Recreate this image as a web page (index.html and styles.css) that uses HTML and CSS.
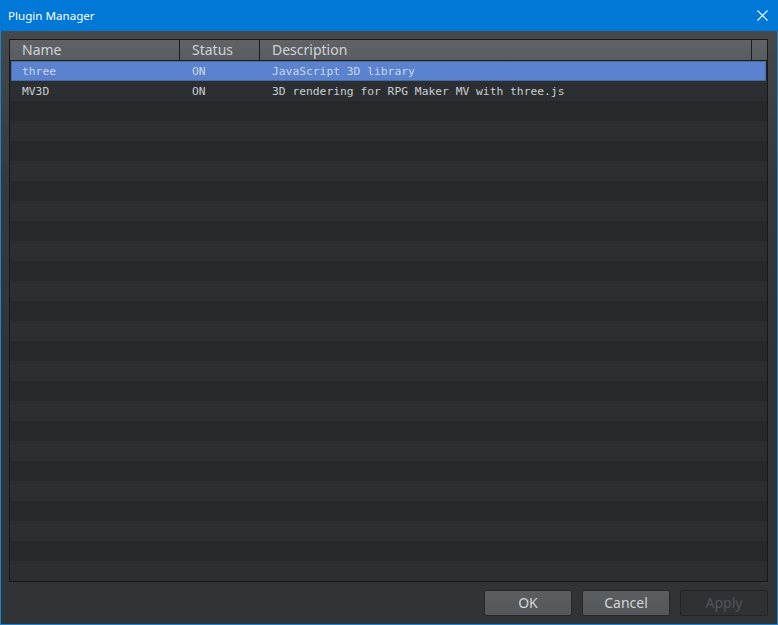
FILE: index.html
```html
<!DOCTYPE html>
<html lang="en">
<head>
    <meta charset="UTF-8">
    <title>Plugin Manager</title>
    <link rel="stylesheet" href="styles.css">
</head>
<body>
    <div class="window">
        <div class="titlebar">
            <span class="title">Plugin Manager</span>
            <svg class="close" width="11" height="11" viewBox="0 0 11 11">
                <path d="M0.5 0.5 L10.5 10.5 M10.5 0.5 L0.5 10.5" stroke="#fff" stroke-width="1.1" fill="none"/>
            </svg>
        </div>
        <div class="content">
            <div class="list">
                <div class="list-header">
                    <div class="col col-name">Name</div>
                    <div class="col col-status">Status</div>
                    <div class="col col-desc">Description</div>
                    <div class="col col-pad"></div>
                </div>
                <div class="list-body">
                    <div class="row selected">
                        <div class="col col-name">three</div>
                        <div class="col col-status">ON</div>
                        <div class="col col-desc">JavaScript 3D library</div>
                    </div>
                    <div class="row">
                        <div class="col col-name">MV3D</div>
                        <div class="col col-status">ON</div>
                        <div class="col col-desc">3D rendering for RPG Maker MV with three.js</div>
                    </div>
                </div>
            </div>
            <div class="buttons">
                <button type="button">OK</button>
                <button type="button">Cancel</button>
                <button type="button" disabled>Apply</button>
            </div>
        </div>
    </div>
</body>
</html>
```

FILE: styles.css
```css
* {
    box-sizing: border-box;
}
body {
    margin: 0;
    font-family: "Noto Sans", "Open Sans", sans-serif;
    background: #303437;
}
.window {
    width: 778px;
    height: 625px;
    display: flex;
    flex-direction: column;
    border: 1px solid #1883d7;
    border-top: none;
}
.titlebar {
    height: 31px;
    flex: none;
    background: #0078d7;
    color: #fff;
    display: flex;
    align-items: center;
    justify-content: space-between;
    padding: 0 10px 1px 8px;
    margin: 0 -1px;
}
.title {
    font-size: 11.6px;
}
.close {
    display: block;
    margin-top: 1px;
}
.content {
    flex: 1;
    display: flex;
    flex-direction: column;
    padding: 8px 9px 8px 8px;
    background: linear-gradient(#46494b, #36393c 25%, #303437 55%);
}
.list {
    flex: 1;
    display: flex;
    flex-direction: column;
    border: 1px solid #16191a;
    background: #25292b;
}
.list-header {
    height: 21px;
    flex: none;
    display: flex;
    background: linear-gradient(#5f6366, #5a5d60);
    border-bottom: 1px solid #1b1e20;
    color: #cfd3d6;
    font-size: 14px;
}
.list-header .col {
    border-right: 1px solid #1b1e20;
    line-height: 20px;
}
.list-header .col-pad {
    border-right: none;
}
.col {
    padding-left: 12px;
    white-space: nowrap;
}
.col-name { width: 170px; }
.col-status { width: 80px; }
.col-desc { width: 492px; }
.col-pad { flex: 1; }
.list-body {
    flex: 1;
    background: repeating-linear-gradient(#25292b 0 20px, #2c2f32 20px 40px);
}
.row {
    height: 20px;
    display: flex;
    align-items: center;
    font-family: "DejaVu Sans Mono", monospace;
    font-size: 11.3px;
    color: #c9cdd1;
}
.row.selected {
    background: #5a82cf;
    box-shadow: inset 0 0 0 1px #4a6aa6;
    color: #cdd6e6;
    margin: 0 1px;
}
.row.selected .col-name {
    width: 169px;
    padding-left: 11px;
}
.buttons {
    flex: none;
    display: flex;
    justify-content: flex-end;
    gap: 10px;
    padding-top: 8px;
}
button {
    width: 88px;
    height: 26px;
    font-family: "Noto Sans", "Open Sans", sans-serif;
    font-size: 14px;
    color: #d0d5d9;
    background: linear-gradient(#5a5e61, #54585b);
    border: 1px solid #25282a;
    border-radius: 2px;
    padding: 0 0 1px;
}
button:disabled {
    background: #2f3235;
    color: #50555a;
    border-color: #222527;
}
```
